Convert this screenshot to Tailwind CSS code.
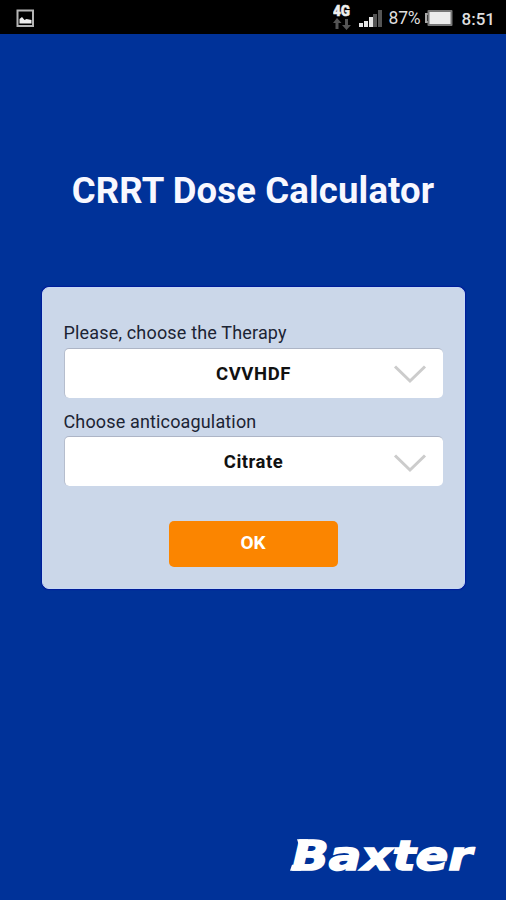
<!DOCTYPE html>
<html lang="en">
<head>
<meta charset="utf-8">
<title>CRRT Dose Calculator</title>
<script src="https://cdn.jsdelivr.net/npm/@tailwindcss/browser@4"></script>
</head>
<body class="w-[506px] h-[900px] overflow-hidden bg-[#003299] flex flex-col font-['Roboto',sans-serif]">
<header class="h-[34px] shrink-0 bg-black flex items-center justify-between pl-4 pr-[11px] text-[#dedede]">
  <svg class="w-[19px] h-[19px] mt-0.5" viewBox="0 0 19 19"><rect x="1.5" y="1.5" width="15.5" height="15.5" fill="none" stroke="#b5b5b5" stroke-width="2"/><path d="M3.500 14.500V10l2.500-2 2.500 3 2-1 5 1v3.500z" fill="#eee"/></svg>
  <div class="flex items-center h-full">
    <svg class="w-[18px] h-[26px] mr-2" viewBox="0 0 18 26"><text x="0" y="12" font-size="14" font-weight="900" textLength="17" lengthAdjust="spacingAndGlyphs" fill="#eee" stroke="#eee" stroke-width=".5">4G</text><path d="M4 14l4.500 5H5.500v6h-3v-6H0zM13.500 26l-4.500-5h3v-6h3v6h3z" fill="#555"/></svg>
    <svg class="w-6 h-[19px] mt-0.5 mr-[6px]" viewBox="0 0 24 19"><path d="M0 14h4v4H0zM5 12h4v6H5zM10 8h4v10h-4z" fill="#e5e5e5"/><path d="M14 5h4v13h-4zM19 1h4v17h-4z" fill="#555"/></svg>
    <span class="text-[17.500px] leading-none mt-1 tracking-[-0.200px] w-[31px] whitespace-nowrap">87%</span>
    <svg class="w-[29px] h-[18px] ml-1 mr-[9px] mt-0.5" viewBox="0 0 29 18"><path d="M4 5H2v8h2" fill="none" stroke="#aaa" stroke-width="2"/><rect x="3.500" y="1" width="25" height="16" rx="1" fill="#777"/><rect x="5.500" y="3" width="21" height="12" fill="#ececec"/></svg>
    <span class="text-[17px] font-medium leading-none mt-1">8:51</span>
  </div>
</header>
<main class="flex-1 flex flex-col items-center">
  <h1 class="mt-[134px] h-[46px] leading-[46px] text-[36.500px] tracking-[0.150px] font-bold text-[#f8f8ff] whitespace-nowrap">CRRT Dose Calculator</h1>
  <section class="mt-[73px] w-[423px] h-[302px] rounded-[7px] border border-[#c6d9f5] bg-[#cbd7e9] shadow-[0_0_1px_1px_#001b99] px-[21px] pt-[33px] flex flex-col text-[#1c2434]">
    <label class="h-[27px] leading-[24px] text-[18px] tracking-[0.170px]">Please, choose the Therapy</label>
    <div class="relative h-[50px] bg-white rounded-[5px] border-t border-l border-t-[#adb5c6] border-l-[#b5bdcd] flex items-center justify-center text-[18.500px] font-bold text-[#111]">
      <span class="tracking-[0.600px] pt-[3px]">CVVHDF</span>
      <svg class="absolute right-[16px] top-[15px] w-[34px] h-[20px]" viewBox="0 0 34 20" fill="none" stroke="#ccc" stroke-width="3"><path d="M2 2.500L17 17L32 2.500"/></svg>
    </div>
    <label class="mt-3 h-[26px] leading-[24px] text-[18px] tracking-[0.150px]">Choose anticoagulation</label>
    <div class="relative h-[50px] bg-white rounded-[5px] border-t border-l border-t-[#adb5c6] border-l-[#b5bdcd] flex items-center justify-center text-[18.500px] font-bold text-[#111]">
      <span class="tracking-[0.500px] pt-[3px]">Citrate</span>
      <svg class="absolute right-[16px] top-[16px] w-[34px] h-[20px]" viewBox="0 0 34 20" fill="none" stroke="#ccc" stroke-width="3"><path d="M2 2.500L17 17L32 2.500"/></svg>
    </div>
    <button class="mt-[35px] w-[169px] h-[46px] shrink-0 self-center rounded-[5px] bg-[#fb8500] text-white text-[19px] font-bold pb-0.5">OK</button>
  </section>
  <footer class="mt-auto self-end mb-[20px] mr-[20px]">
    <svg class="w-[196px] h-[50px] overflow-visible" viewBox="0 0 196 50"><text x="2" y="40" font-family="DejaVu Sans" font-size="41" font-weight="bold" font-style="italic" textLength="180" lengthAdjust="spacingAndGlyphs" fill="white" stroke="white" stroke-width="1.600">Baxter</text><path d="M7 9.300h11l-2 6H9zM0 40.800l2-6h11l-2 6z" fill="white"/></svg>
  </footer>
</main>
</body>
</html>
